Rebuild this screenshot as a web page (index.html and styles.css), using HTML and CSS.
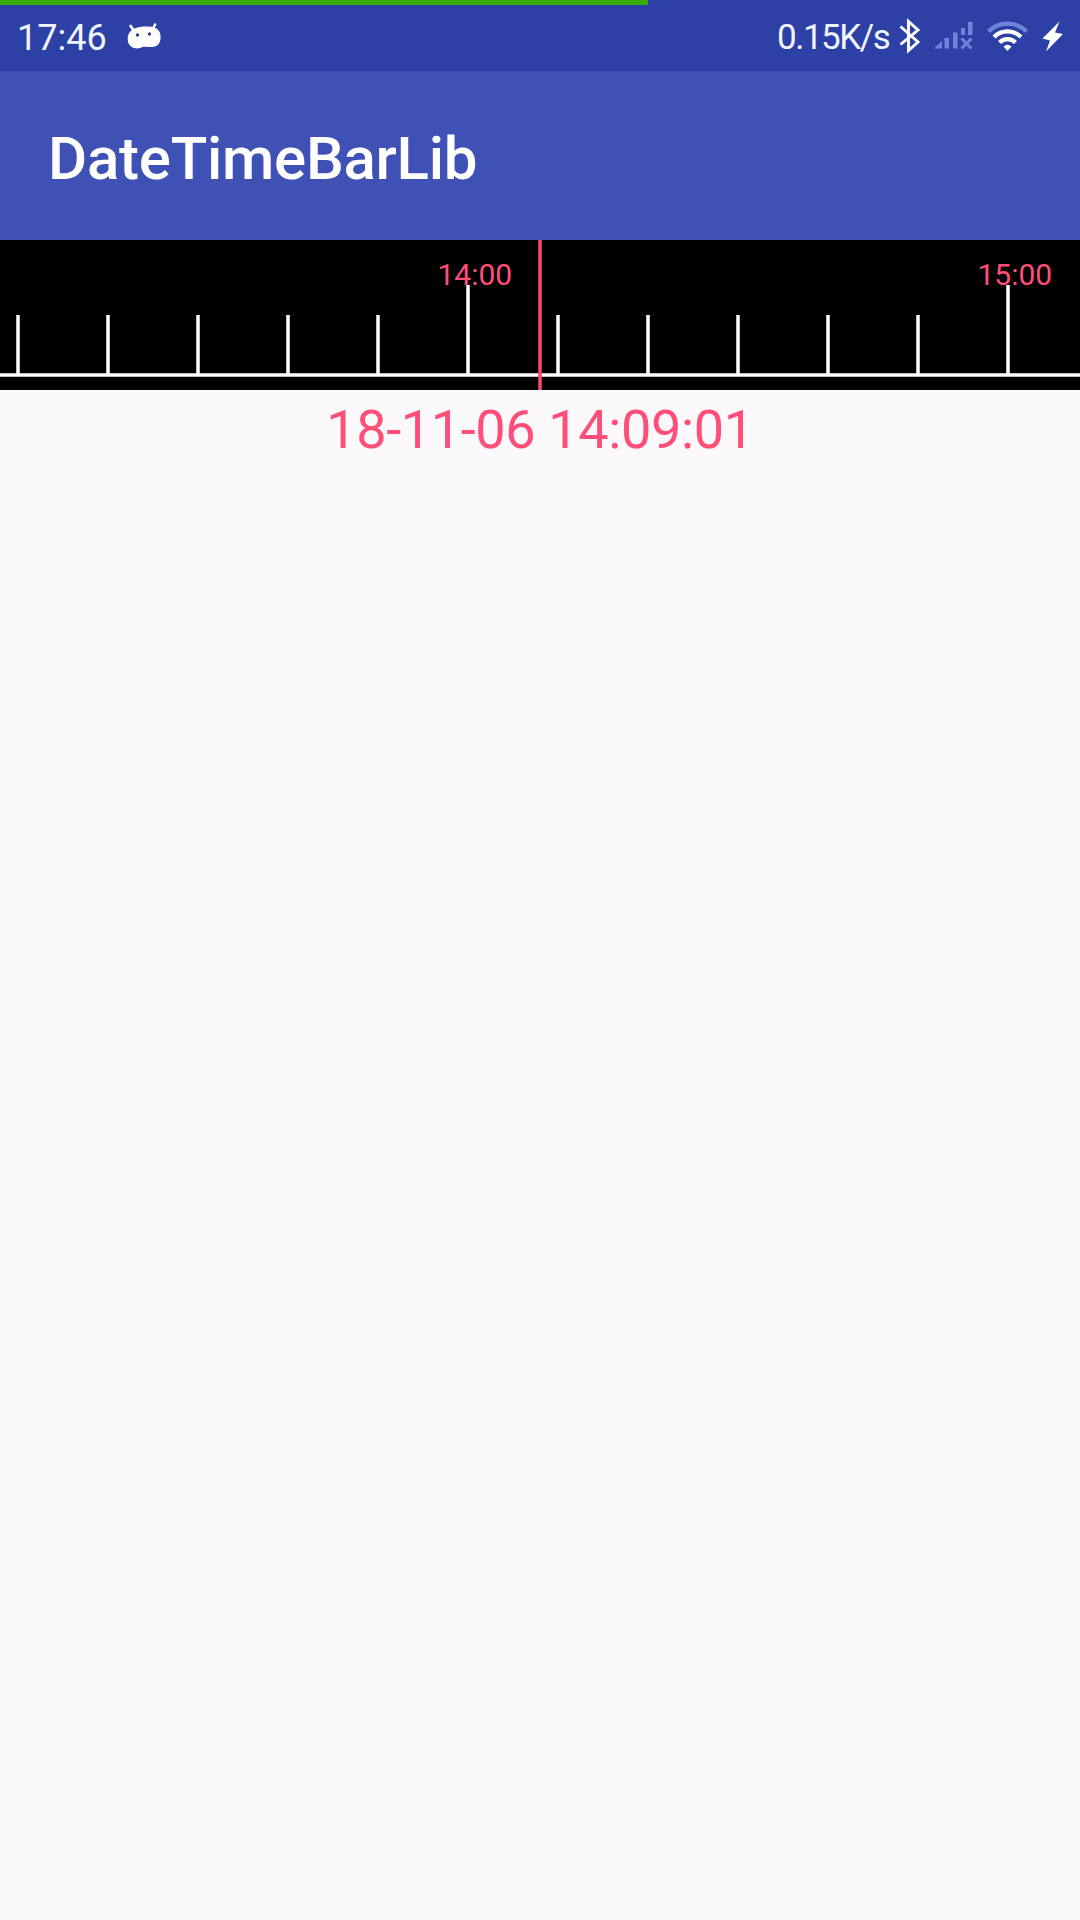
FILE: index.html
```html
<!DOCTYPE html>
<html lang="en">
<head>
<meta charset="utf-8">
<title>DateTimeBarLib</title>
<link rel="stylesheet" href="styles.css">
</head>
<body>
<div class="track"><div class="progress"></div></div>
<header class="status">
  <span class="clock">17:46</span>
  <svg class="robot" width="36" height="28" viewBox="0 0 36 28">
    <path d="M3 2L7 8M28.5 0.5L26 6" stroke="#fff" stroke-width="2.5" fill="none"/>
    <path d="M1 13C3 6 9 4 17 3.500C25 3 31 4 33 10C35 18 32 24 25 24C20 24 17 23 13 25C6 27-1 22 1 13Z" fill="#fff"/>
    <circle cx="10.500" cy="12" r="1.700" fill="#31427a"/><circle cx="22.500" cy="11" r="1.700" fill="#31427a"/>
  </svg>
  <span class="speed">0.15K/s</span>
  <svg class="icons" width="180" height="40" viewBox="0 0 180 40">
    <path d="M10.500 11.500L28 27L18.500 35.500V6.500L28 15L10.500 29.500" fill="none" stroke="#fff" stroke-width="2.900"/>
    <g fill="#6f86d8">
      <path d="M44 33.500L52 26V33.500Z"/>
      <path d="M54.500 23H59V33.500H54.500ZM63 17.500H67.500V33.500H63ZM71 13H75V20H71ZM78 7H82.500V20H78Z"/>
    </g>
    <path d="M71.500 23.500L81.500 33.500M81.500 23.500L71.500 33.500" stroke="#6f86d8" stroke-width="3" fill="none"/>
    <g fill="none" stroke-width="4.200">
      <path d="M98.500 16.500C109 6 126 6 136.500 16.500" stroke="#6f86d8"/>
      <path d="M104 22C111.500 14.500 123.500 14.500 131 22" stroke="#fff"/>
      <path d="M109.500 27.500C114 23 121 23 125.500 27.500" stroke="#fff"/>
    </g>
    <path d="M113.500 31.500Q117.500 28 121.500 31.500L117.500 36Z" fill="#fff"/>
    <path d="M169.500 6.500L152.500 23.500L160 25.500L156 36.500L173 19L165 17.500Z" fill="#fff"/>
  </svg>
</header>
<div class="toolbar"><h1 class="title">DateTimeBarLib</h1></div>
<svg class="timeline" width="1080" height="150" viewBox="0 0 1080 150">
  <g class="label"><text x="437.500" y="45">14:00</text><text x="977.500" y="45">15:00</text></g>
  <path class="rule" d="M0 135H1080M18 75V135M108 75V135M198 75V135M288 75V135M378 75V135M468 45V135M558 75V135M648 75V135M738 75V135M828 75V135M918 75V135M1008 45V135"/>
  <path class="cursor" d="M540 0V150"/>
</svg>
<p class="datetime">18-11-06 14:09:01</p>
</body>
</html>
```
FILE: styles.css
```css
body {
  margin: 0;
  min-height: 1920px;
  background: #fbf9fc;
  font-family: Roboto, sans-serif;
}
.track {
  height: 5px;
  background: #2c40a5;
}
.progress {
  width: 60%;
  height: 100%;
  background: #37ad00;
}
.status {
  display: flex;
  align-items: flex-start;
  box-sizing: border-box;
  height: 66px;
  padding: 12px 0 0 17px;
  background: #2c40a5;
  color: #f1f5ff;
  font-size: 36px;
  line-height: 42px;
}
.clock {
  width: 110px;
}
.robot {
  margin-top: 6px;
}
.speed {
  margin-left: auto;
  width: 113px;
  white-space: nowrap;
  font-size: 35px;
  letter-spacing: -1.5px;
}
.icons {
  margin-top: -2px;
  margin-right: 10px;
}
.toolbar {
  display: flex;
  align-items: center;
  box-sizing: border-box;
  height: 169px;
  padding: 6px 0 0 48px;
  background: #3f51b5;
}
.title {
  margin: 0;
  color: #fff;
  font-size: 60px;
  font-weight: 500;
  letter-spacing: -0.25px;
}
.timeline {
  display: block;
  background: #000;
}
.label {
  fill: #ff4f78;
  font-size: 30px;
}
.rule {
  stroke: #fff;
  stroke-width: 3.5;
}
.cursor {
  stroke: #f54b70;
  stroke-width: 3.5;
}
.datetime {
  margin: 8px 0 0;
  text-align: center;
  color: #ff4f78;
  font-size: 54px;
  line-height: 64px;
  letter-spacing: -0.35px;
}
```
